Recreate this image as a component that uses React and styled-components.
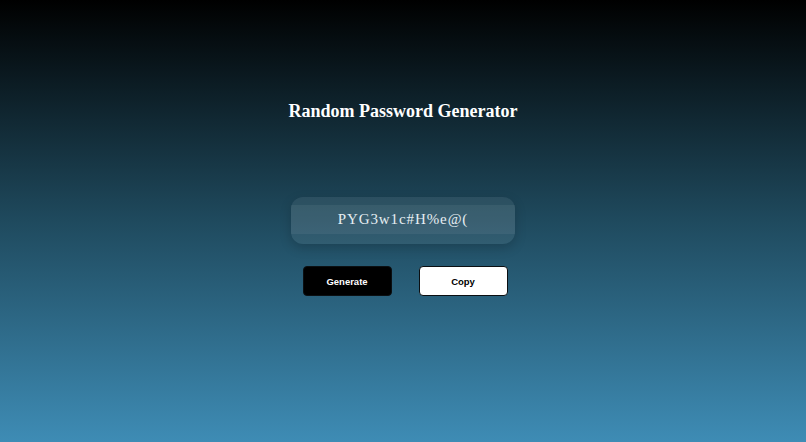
import styled, { createGlobalStyle } from 'styled-components';

const GlobalStyle = createGlobalStyle`
  html, body {
    margin: 0;
    padding: 0;
    height: 100%;
  }
  #root {
    height: 100%;
  }
`;

const App = () => {
  return (
    <>
      <GlobalStyle />
      <Page>
        <Title>Random Password Generator</Title>
        <PasswordBox>
          <PasswordInput readOnly value='PYG3w1c#H%e@(' />
        </PasswordBox>
        <Actions>
          <ActionButton $variant='dark'>Generate</ActionButton>
          <ActionButton $variant='light'>Copy</ActionButton>
        </Actions>
      </Page>
    </>
  );
};

export default App;

const Page = styled.div`
  width: 100%;
  height: 100vh;
  background: linear-gradient(to bottom, #000000 0%, #1f4a5e 50%, #3e8cb5 100%);
  display: flex;
  flex-direction: column;
  align-items: center;
  justify-content: flex-start;
  padding-top: 99px;
  box-sizing: border-box;
  overflow: hidden;
`;

const Title = styled.h2`
  margin: 0;
  color: #ffffff;
  font-family: 'Liberation Serif', 'Times New Roman', serif;
  font-size: 18px;
  font-weight: 700;
  line-height: 24px;
`;

const PasswordBox = styled.div`
  margin-top: 74px;
  width: 224px;
  height: 47px;
  border-radius: 12px;
  background-color: rgba(255, 255, 255, 0.07);
  box-shadow: 0 4px 12px rgba(0, 0, 0, 0.18);
  padding: 8px 0 0;
  box-sizing: border-box;
`;

const PasswordInput = styled.input`
  display: block;
  width: 100%;
  height: 29px;
  border: none;
  outline: none;
  padding: 0;
  background-color: rgba(255, 255, 255, 0.06);
  color: #e6eef2;
  text-align: center;
  font-family: 'Liberation Serif', 'Times New Roman', serif;
  font-size: 15px;
  letter-spacing: 0.9px;
`;

const Actions = styled.div`
  margin-top: 22px;
  margin-left: 4px;
  display: flex;
  flex-direction: row;
  gap: 27px;
`;

const ActionButton = styled.button`
  width: 89px;
  height: 30px;
  border-radius: 4px;
  box-sizing: border-box;
  font-family: 'Liberation Sans', Arial, sans-serif;
  font-size: 9.5px;
  font-weight: 700;
  cursor: pointer;
  background-color: ${(p) => (p.$variant === 'dark' ? '#000000' : '#ffffff')};
  color: ${(p) => (p.$variant === 'dark' ? '#ffffff' : '#000000')};
  border: ${(p) => (p.$variant === 'dark' ? '1px solid #0b0f12' : '1.5px solid #0b0f12')};
`;
